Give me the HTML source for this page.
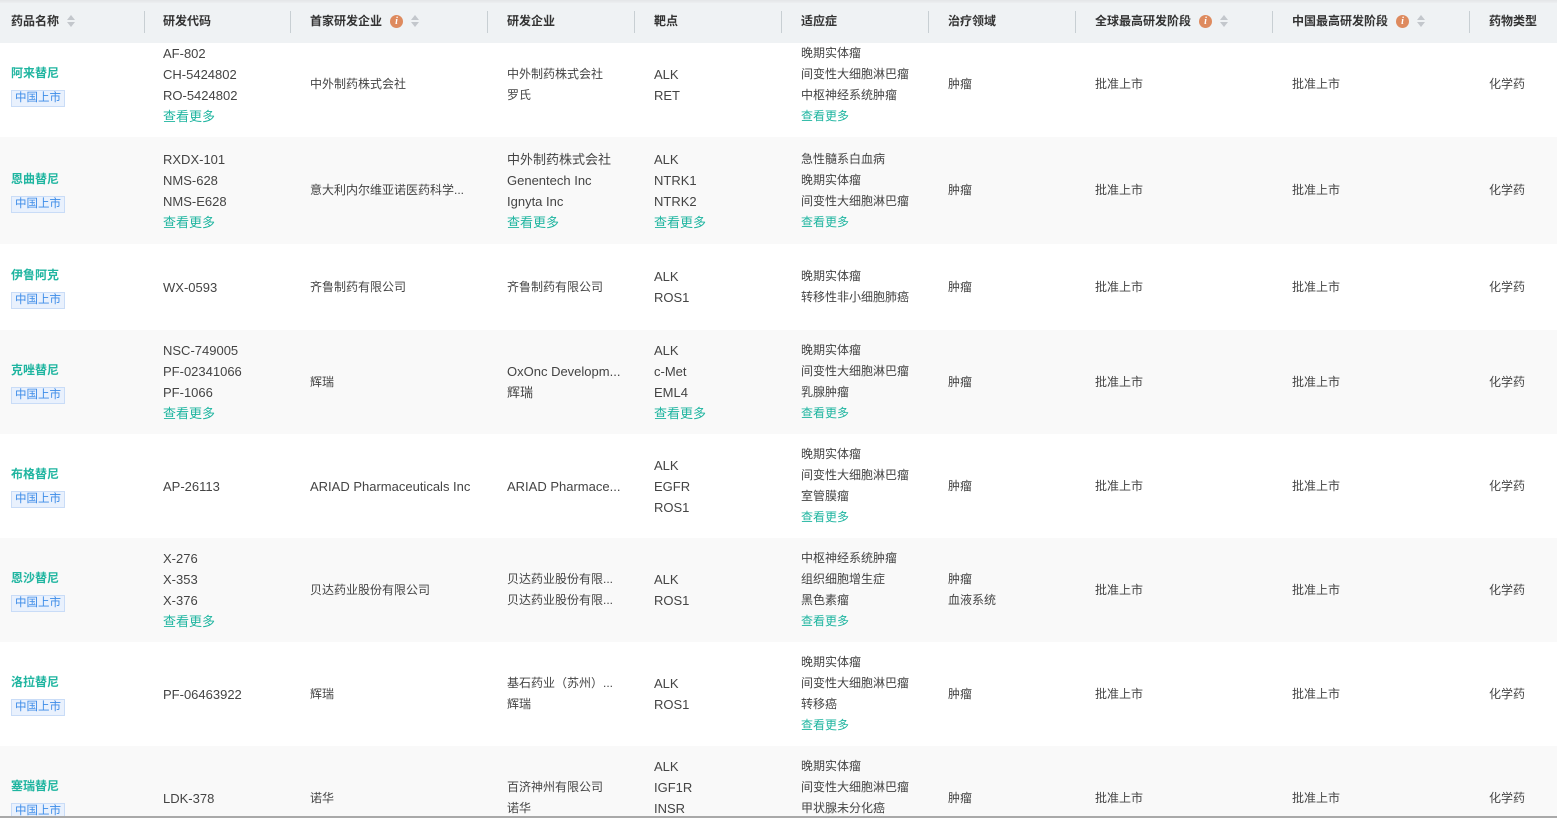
<!DOCTYPE html>
<html style="width:1557px;height:818px;overflow:hidden"><head><meta charset="utf-8"><style>
*{margin:0;padding:0;box-sizing:border-box}
html,body{overflow:hidden}
body{width:1557px;height:818px;overflow:hidden;background:#fff;font-family:"Liberation Sans","Noto Sans CJK SC",sans-serif;font-size:12px;color:#444;position:relative}
.top{position:absolute;left:0;top:0;width:1557px;height:4px;background:linear-gradient(#e4e6e8,#eff2f4)}
.hd{position:absolute;left:0;top:3px;width:1557px;height:40px;background:#eff2f4}
.h{position:absolute;top:10px;font-size:12px;font-weight:bold;color:#333;line-height:16px;display:flex;align-items:center;white-space:nowrap}
.sep{position:absolute;top:8px;width:1px;height:22px;background:#c8cfd3}
.info{display:inline-block;width:13px;height:13px;border-radius:50%;background:#de8a5e;color:#fff;font-size:10px;font-weight:bold;text-align:center;line-height:13px;margin-left:8px;font-family:"Liberation Serif",serif;font-style:italic}
.sort{display:inline-block;margin-left:8px;width:8px;height:12px;position:relative}
.sort:before{content:"";position:absolute;left:0;top:0;border-left:4px solid transparent;border-right:4px solid transparent;border-bottom:5px solid #c3c7cc}
.sort:after{content:"";position:absolute;left:0;top:7px;border-left:4px solid transparent;border-right:4px solid transparent;border-top:5px solid #c3c7cc}
.row{position:absolute;left:0;width:1557px;overflow:hidden}
.g{background:#f9f9f9}
.c{position:absolute;top:0;height:100%;display:flex;flex-direction:column;justify-content:center;line-height:21px;white-space:nowrap;font-size:12px}
.c span{display:block}
.nm{color:#1fb5a0;font-weight:bold}
.tag{display:inline-block;margin-top:6px;height:17px;line-height:15px;padding:0 3px;border:1px solid #c9dcf7;background:#e9f1fd;color:#3d8ce8;font-size:11.5px;align-self:flex-start}
.more{color:#1fb5a0}
.lat{font-size:13px}
.bot{position:absolute;left:0;top:816px;width:1557px;height:2px;background:#a9a9a9}
</style></head><body>
<div class="row" style="top:32px;height:105px"></div>
<div class="row g" style="top:137px;height:107px"></div>
<div class="row" style="top:244px;height:86px"></div>
<div class="row g" style="top:330px;height:104px"></div>
<div class="row" style="top:434px;height:104px"></div>
<div class="row g" style="top:538px;height:104px"></div>
<div class="row" style="top:642px;height:104px"></div>
<div class="row g" style="top:746px;height:72px"></div>

<div class="top"></div>
<div class="hd">
<div class="h" style="left:11px">药品名称<span class="sort"></span></div>
<div class="sep" style="left:144px"></div>
<div class="h" style="left:163px">研发代码</div>
<div class="sep" style="left:290px"></div>
<div class="h" style="left:310px">首家研发企业<span class="info">i</span><span class="sort"></span></div>
<div class="sep" style="left:487px"></div>
<div class="h" style="left:507px">研发企业</div>
<div class="sep" style="left:634px"></div>
<div class="h" style="left:654px">靶点</div>
<div class="sep" style="left:781px"></div>
<div class="h" style="left:801px">适应症</div>
<div class="sep" style="left:928px"></div>
<div class="h" style="left:948px">治疗领域</div>
<div class="sep" style="left:1075px"></div>
<div class="h" style="left:1095px">全球最高研发阶段<span class="info">i</span><span class="sort"></span></div>
<div class="sep" style="left:1272px"></div>
<div class="h" style="left:1292px">中国最高研发阶段<span class="info">i</span><span class="sort"></span></div>
<div class="sep" style="left:1469px"></div>
<div class="h" style="left:1489px">药物类型</div>
</div>

<div class="row" style="top:32px;height:105px">
<div class="c" style="left:11px"><span class="nm">阿来替尼</span><span class="tag">中国上市</span></div>
<div class="c lat" style="left:163px"><span>AF-802</span><span>CH-5424802</span><span>RO-5424802</span><span class="more">查看更多</span></div>
<div class="c" style="left:310px"><span>中外制药株式会社</span></div>
<div class="c" style="left:507px"><span>中外制药株式会社</span><span>罗氏</span></div>
<div class="c lat" style="left:654px"><span>ALK</span><span>RET</span></div>
<div class="c" style="left:801px"><span>晚期实体瘤</span><span>间变性大细胞淋巴瘤</span><span>中枢神经系统肿瘤</span><span class="more">查看更多</span></div>
<div class="c" style="left:948px"><span>肿瘤</span></div>
<div class="c" style="left:1095px"><span>批准上市</span></div>
<div class="c" style="left:1292px"><span>批准上市</span></div>
<div class="c" style="left:1489px"><span>化学药</span></div>
</div>
<div class="row" style="top:137px;height:107px">
<div class="c" style="left:11px"><span class="nm">恩曲替尼</span><span class="tag">中国上市</span></div>
<div class="c lat" style="left:163px"><span>RXDX-101</span><span>NMS-628</span><span>NMS-E628</span><span class="more">查看更多</span></div>
<div class="c" style="left:310px"><span>意大利内尔维亚诺医药科学...</span></div>
<div class="c lat" style="left:507px"><span>中外制药株式会社</span><span>Genentech Inc</span><span>Ignyta Inc</span><span class="more">查看更多</span></div>
<div class="c lat" style="left:654px"><span>ALK</span><span>NTRK1</span><span>NTRK2</span><span class="more">查看更多</span></div>
<div class="c" style="left:801px"><span>急性髓系白血病</span><span>晚期实体瘤</span><span>间变性大细胞淋巴瘤</span><span class="more">查看更多</span></div>
<div class="c" style="left:948px"><span>肿瘤</span></div>
<div class="c" style="left:1095px"><span>批准上市</span></div>
<div class="c" style="left:1292px"><span>批准上市</span></div>
<div class="c" style="left:1489px"><span>化学药</span></div>
</div>
<div class="row" style="top:244px;height:86px">
<div class="c" style="left:11px"><span class="nm">伊鲁阿克</span><span class="tag">中国上市</span></div>
<div class="c lat" style="left:163px"><span>WX-0593</span></div>
<div class="c" style="left:310px"><span>齐鲁制药有限公司</span></div>
<div class="c" style="left:507px"><span>齐鲁制药有限公司</span></div>
<div class="c lat" style="left:654px"><span>ALK</span><span>ROS1</span></div>
<div class="c" style="left:801px"><span>晚期实体瘤</span><span>转移性非小细胞肺癌</span></div>
<div class="c" style="left:948px"><span>肿瘤</span></div>
<div class="c" style="left:1095px"><span>批准上市</span></div>
<div class="c" style="left:1292px"><span>批准上市</span></div>
<div class="c" style="left:1489px"><span>化学药</span></div>
</div>
<div class="row" style="top:330px;height:104px">
<div class="c" style="left:11px"><span class="nm">克唑替尼</span><span class="tag">中国上市</span></div>
<div class="c lat" style="left:163px"><span>NSC-749005</span><span>PF-02341066</span><span>PF-1066</span><span class="more">查看更多</span></div>
<div class="c" style="left:310px"><span>辉瑞</span></div>
<div class="c lat" style="left:507px"><span>OxOnc Developm...</span><span>辉瑞</span></div>
<div class="c lat" style="left:654px"><span>ALK</span><span>c-Met</span><span>EML4</span><span class="more">查看更多</span></div>
<div class="c" style="left:801px"><span>晚期实体瘤</span><span>间变性大细胞淋巴瘤</span><span>乳腺肿瘤</span><span class="more">查看更多</span></div>
<div class="c" style="left:948px"><span>肿瘤</span></div>
<div class="c" style="left:1095px"><span>批准上市</span></div>
<div class="c" style="left:1292px"><span>批准上市</span></div>
<div class="c" style="left:1489px"><span>化学药</span></div>
</div>
<div class="row" style="top:434px;height:104px">
<div class="c" style="left:11px"><span class="nm">布格替尼</span><span class="tag">中国上市</span></div>
<div class="c lat" style="left:163px"><span>AP-26113</span></div>
<div class="c lat" style="left:310px"><span>ARIAD Pharmaceuticals Inc</span></div>
<div class="c lat" style="left:507px"><span>ARIAD Pharmace...</span></div>
<div class="c lat" style="left:654px"><span>ALK</span><span>EGFR</span><span>ROS1</span></div>
<div class="c" style="left:801px"><span>晚期实体瘤</span><span>间变性大细胞淋巴瘤</span><span>室管膜瘤</span><span class="more">查看更多</span></div>
<div class="c" style="left:948px"><span>肿瘤</span></div>
<div class="c" style="left:1095px"><span>批准上市</span></div>
<div class="c" style="left:1292px"><span>批准上市</span></div>
<div class="c" style="left:1489px"><span>化学药</span></div>
</div>
<div class="row" style="top:538px;height:104px">
<div class="c" style="left:11px"><span class="nm">恩沙替尼</span><span class="tag">中国上市</span></div>
<div class="c lat" style="left:163px"><span>X-276</span><span>X-353</span><span>X-376</span><span class="more">查看更多</span></div>
<div class="c" style="left:310px"><span>贝达药业股份有限公司</span></div>
<div class="c" style="left:507px"><span>贝达药业股份有限...</span><span>贝达药业股份有限...</span></div>
<div class="c lat" style="left:654px"><span>ALK</span><span>ROS1</span></div>
<div class="c" style="left:801px"><span>中枢神经系统肿瘤</span><span>组织细胞增生症</span><span>黑色素瘤</span><span class="more">查看更多</span></div>
<div class="c" style="left:948px"><span>肿瘤</span><span>血液系统</span></div>
<div class="c" style="left:1095px"><span>批准上市</span></div>
<div class="c" style="left:1292px"><span>批准上市</span></div>
<div class="c" style="left:1489px"><span>化学药</span></div>
</div>
<div class="row" style="top:642px;height:104px">
<div class="c" style="left:11px"><span class="nm">洛拉替尼</span><span class="tag">中国上市</span></div>
<div class="c lat" style="left:163px"><span>PF-06463922</span></div>
<div class="c" style="left:310px"><span>辉瑞</span></div>
<div class="c" style="left:507px"><span>基石药业（苏州）...</span><span>辉瑞</span></div>
<div class="c lat" style="left:654px"><span>ALK</span><span>ROS1</span></div>
<div class="c" style="left:801px"><span>晚期实体瘤</span><span>间变性大细胞淋巴瘤</span><span>转移癌</span><span class="more">查看更多</span></div>
<div class="c" style="left:948px"><span>肿瘤</span></div>
<div class="c" style="left:1095px"><span>批准上市</span></div>
<div class="c" style="left:1292px"><span>批准上市</span></div>
<div class="c" style="left:1489px"><span>化学药</span></div>
</div>
<div class="row" style="top:746px;height:72px">
<div style="position:absolute;left:0;top:0;width:1557px;height:104px">
<div class="c" style="left:11px"><span class="nm">塞瑞替尼</span><span class="tag">中国上市</span></div>
<div class="c lat" style="left:163px"><span>LDK-378</span></div>
<div class="c" style="left:310px"><span>诺华</span></div>
<div class="c" style="left:507px"><span>百济神州有限公司</span><span>诺华</span></div>
<div class="c lat" style="left:654px"><span>ALK</span><span>IGF1R</span><span>INSR</span><span class="more">查看更多</span></div>
<div class="c" style="left:801px"><span>晚期实体瘤</span><span>间变性大细胞淋巴瘤</span><span>甲状腺未分化癌</span><span class="more">查看更多</span></div>
<div class="c" style="left:948px"><span>肿瘤</span></div>
<div class="c" style="left:1095px"><span>批准上市</span></div>
<div class="c" style="left:1292px"><span>批准上市</span></div>
<div class="c" style="left:1489px"><span>化学药</span></div>
</div>
</div>
<div class="bot"></div>
</body></html>
